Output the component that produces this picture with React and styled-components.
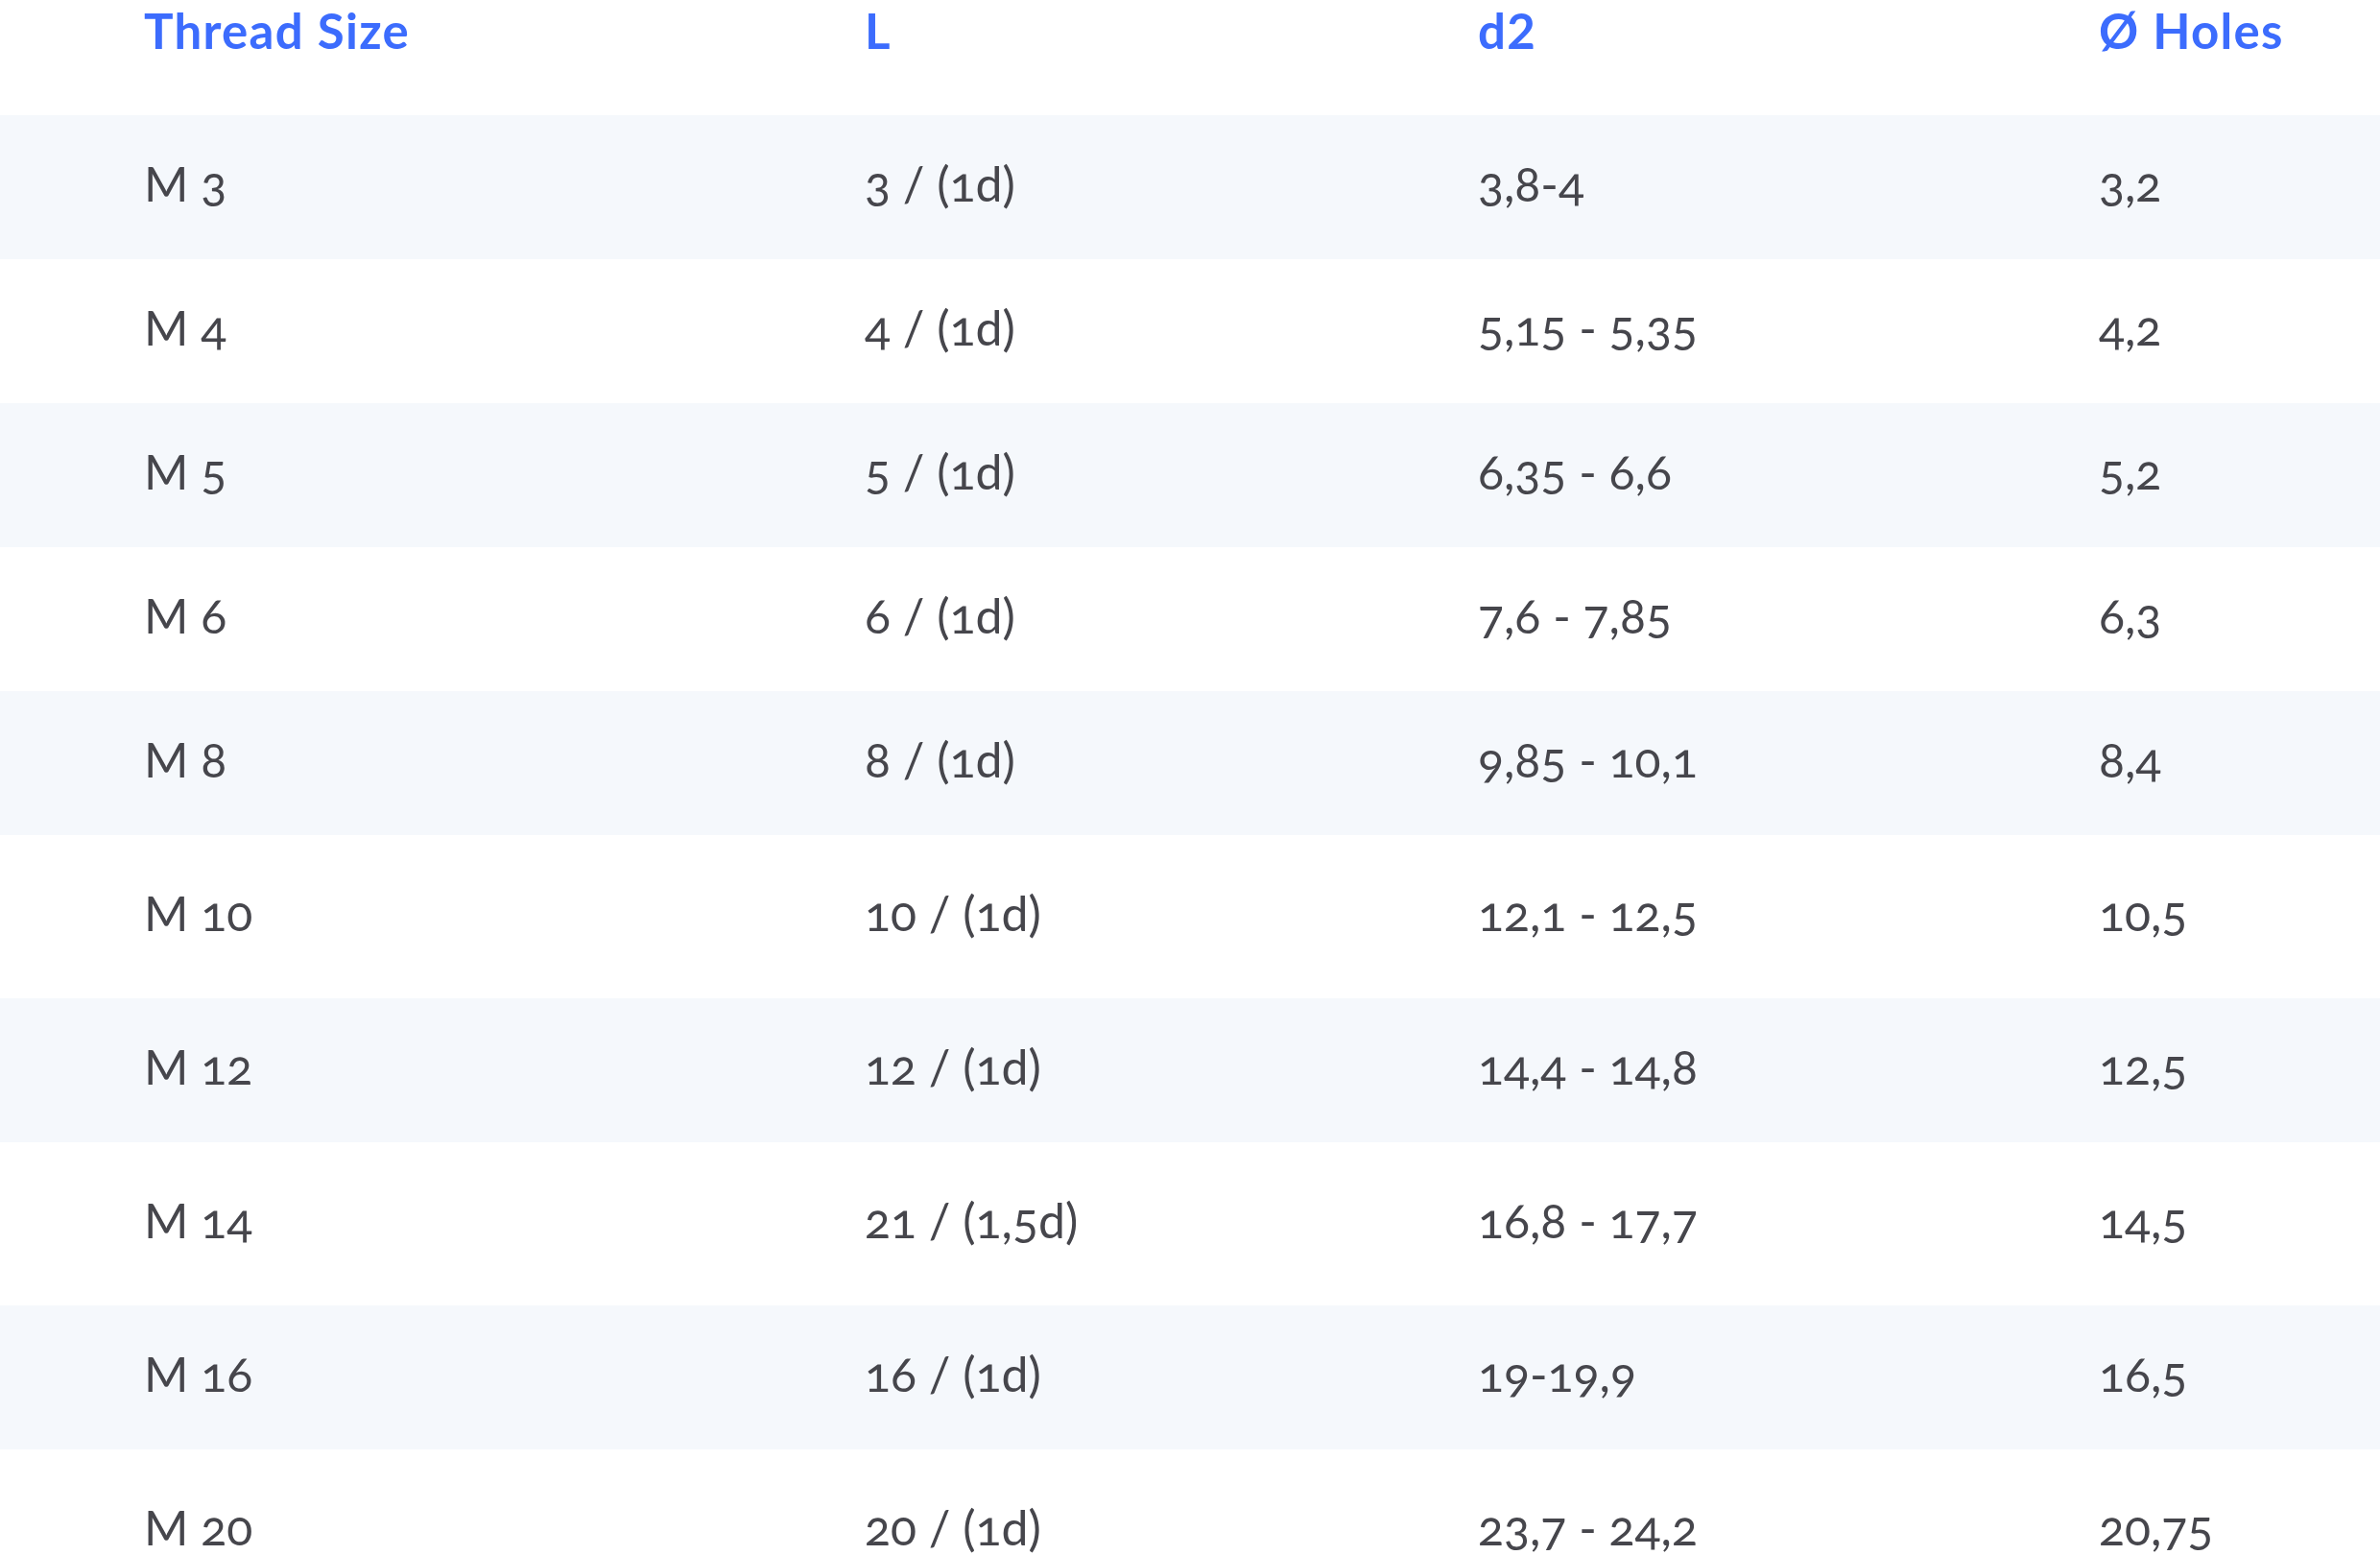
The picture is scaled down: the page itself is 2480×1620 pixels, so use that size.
import React from 'react';
import styled, { createGlobalStyle } from 'styled-components';

const GlobalStyle = createGlobalStyle`
  html, body {
    margin: 0;
    padding: 0;
    background: #ffffff;
  }
  body {
    font-family: Lato, 'Noto Sans', 'Liberation Sans', sans-serif;
  }
`;

const headers = ['Thread Size', 'L', 'd2', 'Ø Holes'];

// tall marks the rows that are rendered higher in the original sheet
const rows = [
  { cells: ['M 3', '3 / (1d)', '3,8-4', '3,2'] },
  { cells: ['M 4', '4 / (1d)', '5,15 - 5,35', '4,2'] },
  { cells: ['M 5', '5 / (1d)', '6,35 - 6,6', '5,2'] },
  { cells: ['M 6', '6 / (1d)', '7,6 - 7,85', '6,3'] },
  { cells: ['M 8', '8 / (1d)', '9,85 - 10,1', '8,4'] },
  { cells: ['M 10', '10 / (1d)', '12,1 - 12,5', '10,5'], tall: true },
  { cells: ['M 12', '12 / (1d)', '14,4 - 14,8', '12,5'] },
  { cells: ['M 14', '21 / (1,5d)', '16,8 - 17,7', '14,5'], tall: true },
  { cells: ['M 16', '16 / (1d)', '19-19,9', '16,5'] },
  { cells: ['M 20', '20 / (1d)', '23,7 - 24,2', '20,75'], tall: true },
];

const Page = styled.div`
  width: 100%;
  height: 1620px;
  overflow: hidden;
  background: #ffffff;
`;

const Row = styled.div`
  display: grid;
  grid-template-columns: 751px 639px 647px 1fr;
  align-items: center;
  padding: 0 0 8px 150px;
  box-sizing: border-box;
  height: ${p => (p.$tall ? 170 : 150)}px;
  background: ${p => (p.$shaded ? '#f5f8fc' : '#ffffff')};
`;

const HeadRow = styled(Row)`
  height: 120px;
  align-items: start;
  padding: 6px 0 0 150px;
`;

const HeadCell = styled.div`
  font-size: 51px;
  line-height: 1;
  font-weight: 700;
  letter-spacing: 1.3px;
  color: #3c6cfd;
  white-space: nowrap;
`;

const Cell = styled.div`
  font-size: 50px;
  line-height: 1;
  font-weight: 400;
  color: #46464c;
  white-space: nowrap;
  font-variant-numeric: oldstyle-nums;
`;

export default function App() {
  return (
    <Page>
      <GlobalStyle />
      <HeadRow>
        {headers.map(h => (
          <HeadCell key={h}>{h}</HeadCell>
        ))}
      </HeadRow>
      {rows.map((r, i) => (
        <Row key={r.cells[0]} $shaded={i % 2 === 0} $tall={r.tall}>
          {r.cells.map((c, j) => (
            <Cell key={j}>{c}</Cell>
          ))}
        </Row>
      ))}
    </Page>
  );
}
